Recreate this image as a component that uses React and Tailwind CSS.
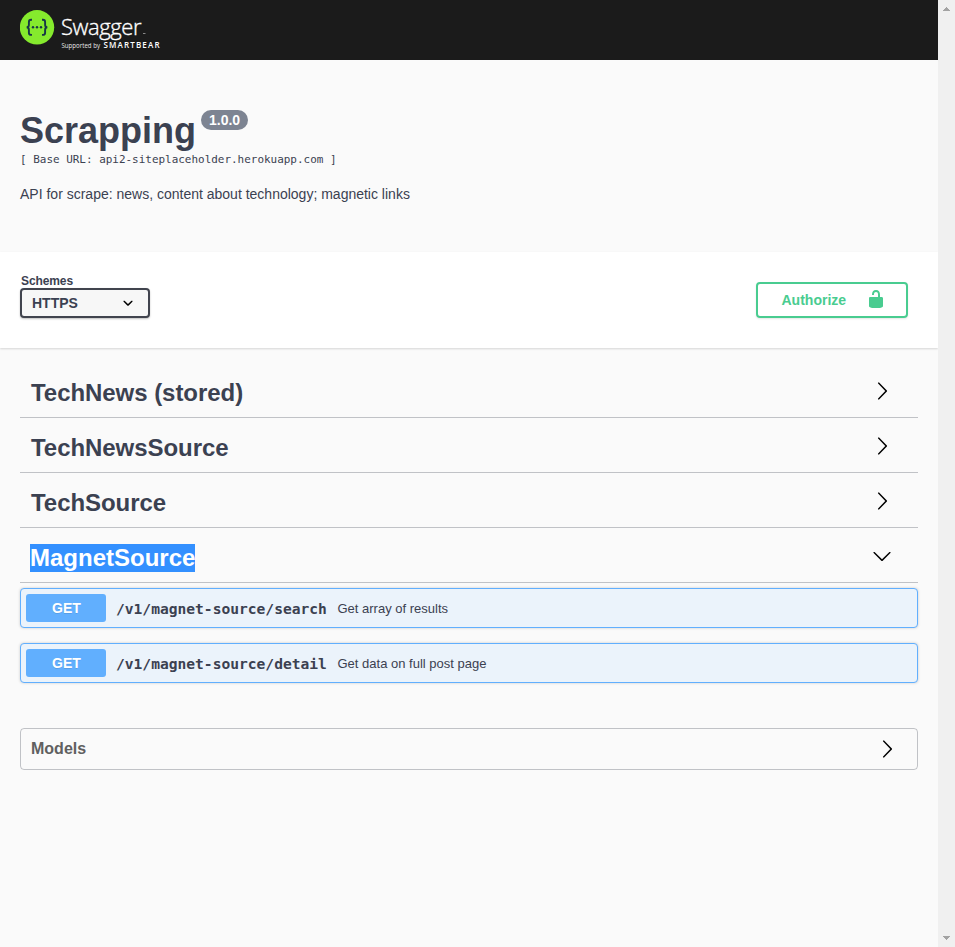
import React from "react";

const ARROW_RIGHT =
  "M13.25 10L6.109 2.58c-.268-.27-.268-.707 0-.979.268-.27.701-.27.969 0l7.83 7.908c.268.271.268.709 0 .979l-7.83 7.908c-.268.271-.701.27-.969 0-.268-.269-.268-.707 0-.979L13.25 10z";
const ARROW_DOWN =
  "M17.418 6.109c.272-.268.709-.268.979 0s.271.701 0 .969l-7.908 7.83c-.27.268-.707.268-.979 0l-7.908-7.83c-.27-.268-.27-.701 0-.969.271-.268.709-.268.979 0L10 13.25l7.418-7.141z";
const SELECT_ARROW =
  "M13.418 7.859c.271-.268.709-.268.978 0 .27.268.272.701 0 .969l-3.908 3.83c-.27.268-.707.268-.979 0l-3.908-3.83c-.27-.267-.27-.701 0-.969.271-.268.709-.268.978 0L10 11l3.418-3.141z";
const UNLOCKED =
  "M15.8 8H14V5.6C14 2.703 12.665 1 10 1 7.334 1 6 2.703 6 5.6V6h2v-.801C8 3.754 8.797 3 10 3c1.203 0 2 .754 2 2.199V8H4c-.553 0-1 .646-1 1.199V17c0 .549.428 1.139.951 1.307l1.197.387C5.672 18.861 6.55 19 7.1 19h5.8c.549 0 1.428-.139 1.951-.307l1.196-.387c.524-.167.953-.757.953-1.306V9.199C17 8.646 16.352 8 15.8 8z";

function Icon({ d, className = "" }) {
  return (
    <svg viewBox="0 0 20 20" className={`h-5 w-5 shrink-0 fill-current ${className}`}>
      <path d={d} />
    </svg>
  );
}

function Logo() {
  return (
    <svg width="150" height="44" viewBox="0 0 150 44">
      <circle cx="17" cy="17.3" r="17.2" fill="#85ea2d" />
      <g fill="none" stroke="#173647" strokeWidth="1.9">
        <path d="M12 9.7h-.9c-1.5 0-2.2.8-2.2 2.2v2.800c0 1.500-.7 2.500-2.200 2.600 1.500.1 2.200 1.100 2.200 2.600v2.800c0 1.400.7 2.200 2.200 2.200h.9" />
        <path d="M22 9.700h.9c1.500 0 2.200.8 2.200 2.200v2.800c0 1.500.7 2.500 2.200 2.600-1.500.1-2.200 1.100-2.200 2.600v2.800c0 1.400-.7 2.200-2.200 2.200H22" />
      </g>
      <g fill="#173647">
        <circle cx="13" cy="17.300" r="1.200" />
        <circle cx="17" cy="17.300" r="1.200" />
        <circle cx="21" cy="17.300" r="1.200" />
      </g>
      <g fill="#fff" className="font-['Open_Sans',sans-serif]">
        <text x="41" y="24.500" fontSize="22" fontWeight="300" textLength="80.500" lengthAdjust="spacing" stroke="#fff" strokeWidth="0.350">Swagger</text>
        <rect x="123" y="23" width="2.500" height="0.800" opacity="0.6" />
        <text x="41.500" y="38.200" fontSize="6.400" textLength="38.500" lengthAdjust="spacingAndGlyphs" opacity="0.900">Supported by</text>
        <text x="83.500" y="38" fontSize="8" fontWeight="600" textLength="56" lengthAdjust="spacing">SMARTBEAR</text>
      </g>
    </svg>
  );
}

function Tag({ name, open }) {
  return (
    <div className="flex h-[55px] items-start justify-between border-b border-[#3b4151]/30 pt-4 pr-[26px] pl-[10px]">
      <h3
        className={`h-7 text-2xl leading-7 font-bold ${
          open ? "bg-[#3390ff] text-white" : "pl-px tracking-[-0.05px]"
        }`}
      >
        {name}
      </h3>
      <Icon d={open ? ARROW_DOWN : ARROW_RIGHT} className="mt-[2px] text-black" />
    </div>
  );
}

function Operation({ path, summary }) {
  return (
    <div className="flex h-10 items-center rounded border border-[#61affe] bg-[#ebf3fb] px-[5px] shadow-[0_0_3px_rgba(0,0,0,0.19)]">
      <span className="h-7 w-20 rounded-[3px] bg-[#61affe] pl-px text-center text-sm leading-7 font-bold text-white [text-shadow:0_1px_0_rgba(0,0,0,0.1)]">
        GET
      </span>
      <span className="w-[231.5px] pt-0.5 pl-[10px] font-['DejaVu_Sans_Mono',monospace] text-[14.6px] font-bold whitespace-nowrap">
        {path}
      </span>
      <span className="pt-0.5 text-[13px]">{summary}</span>
    </div>
  );
}

function Scrollbar() {
  return (
    <div className="flex w-[17px] flex-col items-center justify-between bg-[#f0f0f0] py-[7px]">
      <svg width="7" height="4" viewBox="0 0 7 4" shapeRendering="crispEdges" className="fill-[#a3a3a3]">
        <path d="M3 0h1v1h1v1h1v1h1v1H0V3h1V2h1V1h1z" />
      </svg>
      <svg width="7" height="4" viewBox="0 0 7 4" shapeRendering="crispEdges" className="fill-[#a3a3a3]">
        <path d="M0 0h7v1H6v1H5v1H4v1H3V3H2V2H1V1H0z" />
      </svg>
    </div>
  );
}

export default function App() {
  return (
    <div className="flex h-[947px] w-[955px] overflow-hidden bg-[#fafafa] font-['Liberation_Sans',Arial,sans-serif] text-[#3b4151]">
      <div className="flex w-[938px] flex-col">
        <header className="h-[60px] bg-[#1b1b1b] pt-[10px] pl-5">
          <Logo />
        </header>

        <section className="h-[192px] px-5 pt-[50px]">
          <div className="flex h-[43px] items-start">
            <h2 className="text-4xl leading-[42px] font-bold">Scrapping</h2>
            <span className="ml-[5px] h-5 w-[47px] rounded-full bg-[#7d8492] text-center text-sm leading-5 font-bold text-white">
              1.0.0
            </span>
          </div>
          <pre className="font-['DejaVu_Sans_Mono',monospace] text-[10.96px] leading-[14px]">
            [ Base URL: api2-siteplaceholder.herokuapp.com ]
          </pre>
          <p className="mt-[19px] text-sm leading-4">
            API for scrape: news, content about technology; magnetic links
          </p>
        </section>

        <section className="flex h-[96px] justify-between bg-white pr-[30px] pl-5 shadow-[0_1px_2px_rgba(0,0,0,0.15)]">
          <div className="pt-[22px]">
            <div className="h-[14px] pl-px text-xs leading-[14px] font-bold tracking-[-0.1px]">Schemes</div>
            <div className="flex h-[30px] w-[130px] items-center justify-between rounded border-2 border-[#41444e] bg-[#f7f7f7] pr-[10px] pl-[10px] text-sm font-bold shadow-[0_1px_2px_rgba(0,0,0,0.25)]">
              <span>HTTPS</span>
              <Icon d={SELECT_ARROW} className="text-black" />
            </div>
          </div>
          <button className="mt-[30px] flex h-9 w-[152px] items-center justify-between rounded border-2 border-[#49cc90] pr-5 pl-[23.5px] text-sm font-bold text-[#49cc90] shadow-[0_1px_2px_rgba(0,0,0,0.1)]">
            <span>Authorize</span>
            <Icon d={UNLOCKED} className="mb-0.5" />
          </button>
        </section>

        <main className="px-5 pt-[15px]">
          <Tag name="TechNews (stored)" />
          <Tag name="TechNewsSource" />
          <Tag name="TechSource" />
          <Tag name="MagnetSource" open />
          <div className="mt-[5px] flex flex-col gap-[15px]">
            <Operation path="/v1/magnet-source/search" summary="Get array of results" />
            <Operation path="/v1/magnet-source/detail" summary="Get data on full post page" />
          </div>
          <div className="mt-[45px] flex h-[42px] items-center justify-between rounded border border-[#3b4151]/30 pr-5 pl-[10px]">
            <h4 className="text-base leading-5 font-bold text-[#606060]">Models</h4>
            <Icon d={ARROW_RIGHT} className="text-black" />
          </div>
        </main>
      </div>
      <Scrollbar />
    </div>
  );
}
